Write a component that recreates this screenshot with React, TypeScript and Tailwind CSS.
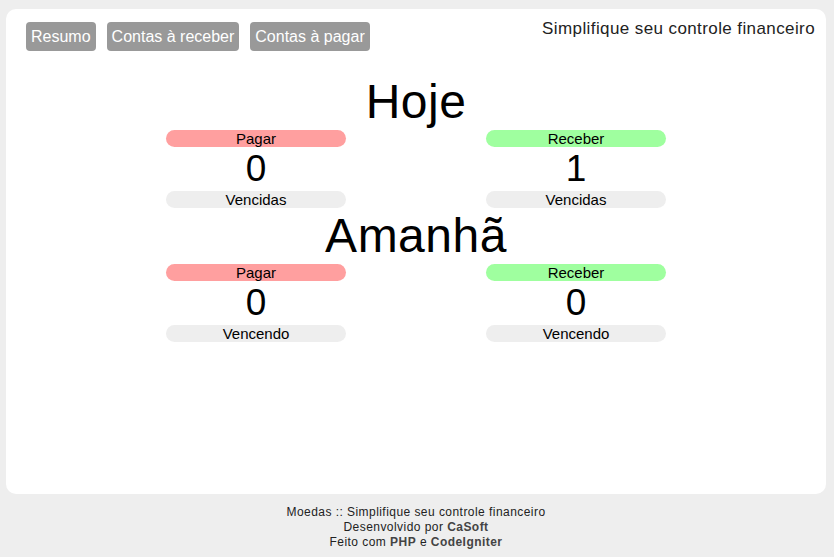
import React from "react";

const font = { fontFamily: '"Liberation Sans", Arial, sans-serif' };

function Bar({ color, children }: { color: string; children: React.ReactNode }) {
  return (
    <div className={`mx-auto w-[180px] h-[17px] rounded-full text-[15px] leading-[17px] text-center text-black ${color}`}>
      {children}
    </div>
  );
}

function Col({ top, topColor, value, bottom }: { top: string; topColor: string; value: string; bottom: string }) {
  return (
    <div className="flex flex-col">
      <Bar color={topColor}>{top}</Bar>
      <div className="text-[37px] leading-[44px] text-center text-black">{value}</div>
      <Bar color="bg-[#eeeeee]">{bottom}</Bar>
    </div>
  );
}

function Section({ title, a, b, label }: { title: string; a: string; b: string; label: string }) {
  return (
    <div>
      <div className="text-[48px] leading-[56px] text-center text-black tracking-[0.5px]">{title}</div>
      <div className="mx-auto w-[640px] grid grid-cols-2">
        <Col top="Pagar" topColor="bg-[#ff9f9f]" value={a} bottom={label} />
        <Col top="Receber" topColor="bg-[#9fff9f]" value={b} bottom={label} />
      </div>
    </div>
  );
}

export default function App() {
  return (
    <div className="min-h-[557px] bg-[#eeeeee] pt-[9px] pl-[6px] pr-[8px]" style={font}>
      <div className="h-[485px] bg-white rounded-[10px] pt-[10px]">
        <div className="flex justify-between items-start pl-[20px] pr-[11px]">
          <div className="flex gap-[11px] mt-[3px]">
            {["Resumo", "Contas à receber", "Contas à pagar"].map((t) => (
              <div key={t} className="h-[29px] px-[5px] flex items-center bg-[#999999] text-white text-[16px] rounded-[4px]">
                {t}
              </div>
            ))}
          </div>
          <div className="text-[17px] leading-[20px] text-[#222222] tracking-[0.4px]">Simplifique seu controle financeiro</div>
        </div>
        <div className="mt-[23px]">
          <Section title="Hoje" a="0" b="1" label="Vencidas" />
          <Section title="Amanhã" a="0" b="0" label="Vencendo" />
        </div>
      </div>
      <div className="pt-[11px] text-center text-[12px] leading-[15px] text-[#222222] tracking-[0.45px]">
        <div>Moedas :: Simplifique seu controle financeiro</div>
        <div>
          Desenvolvido por <b className="text-[#444444]">CaSoft</b>
        </div>
        <div>
          Feito com <b className="text-[#444444]">PHP</b> e <b className="text-[#444444]">CodeIgniter</b>
        </div>
      </div>
    </div>
  );
}
